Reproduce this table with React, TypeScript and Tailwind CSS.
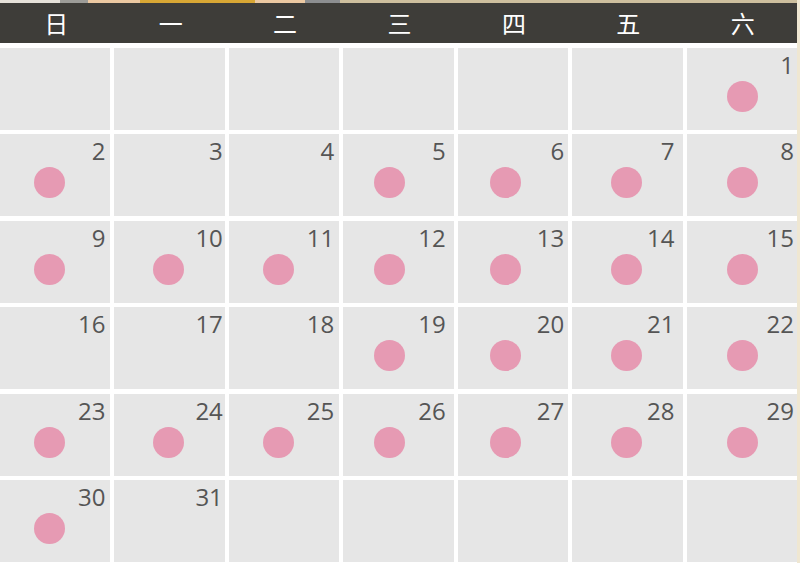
const weekdays = ['日', '一', '二', '三', '四', '五', '六'];

// days with a pink mark
const marked = new Set([1, 2, 5, 6, 7, 8, 9, 10, 11, 12, 13, 14, 15, 19, 20, 21, 22, 23, 24, 25, 26, 27, 28, 29, 30]);

// small per-column nudges, the photo is not perfectly even
const numPad = ['pr-[5px]', 'pr-[2px]', 'pr-[5px]', 'pr-[8px]', 'pr-[4px]', 'pr-[8px]', 'pr-[3px]'];
const dotShift = ['-translate-x-[6px]', '-translate-x-[1px]', '-translate-x-[6px]', '-translate-x-[9px]', '-translate-x-[7px]', '-translate-x-[1px]', 'translate-x-[1px]'];

const cells: (number | null)[] = [
  ...Array(6).fill(null),
  ...Array.from({ length: 31 }, (_, i) => i + 1),
  ...Array(5).fill(null),
];

export default function App() {
  return (
    <div className="w-[800px] h-[563px] overflow-hidden bg-white flex">
      <div className="w-[797px] flex flex-col">
        {/* strip at the very top */}
        <div className="h-[3px] flex">
          <div className="w-[60px] bg-[#e6e2da]" />
          <div className="w-[28px] bg-[#9c9c98]" />
          <div className="w-[52px] bg-[#ecc9a2]" />
          <div className="w-[115px] bg-[#d8a734]" />
          <div className="w-[50px] bg-[#ecc9a2]" />
          <div className="w-[35px] bg-[#8c8e90]" />
          <div className="flex-1 bg-[#cdbf9e]" />
        </div>

        {/* weekday header */}
        <div className="h-[40px] bg-[#3e3d39] grid grid-cols-7 gap-x-[4px]">
          {weekdays.map((d) => (
            <div
              key={d}
              className="flex items-center justify-center text-white text-[24px] leading-none pl-[2px]"
              style={{ fontFamily: '"Noto Sans CJK SC", "Noto Sans", sans-serif' }}
            >
              {d}
            </div>
          ))}
        </div>

        {/* days */}
        <div
          className="mt-[5px] grid grid-cols-7 gap-x-[4px] gap-y-[4.4px] auto-rows-[82px]"
          style={{ fontFamily: '"Open Sans", "Noto Sans", sans-serif' }}
        >
          {cells.map((day, i) => {
            const col = i % 7;
            return (
              <div key={i} className="bg-[#e6e6e6] flex flex-col">
                {day !== null && (
                  <>
                    <div className={`text-right text-[24px] leading-none text-[#555555] pt-[5px] ${numPad[col]}`}>
                      {day}
                    </div>
                    {marked.has(day) && (
                      <div className={`mt-[4px] self-center w-[31px] h-[31px] rounded-full bg-[#e69ab3] ${dotShift[col]}`} />
                    )}
                  </>
                )}
              </div>
            );
          })}
        </div>
      </div>
      <div className="flex-1 bg-[#efe7d2]" />
    </div>
  );
}
